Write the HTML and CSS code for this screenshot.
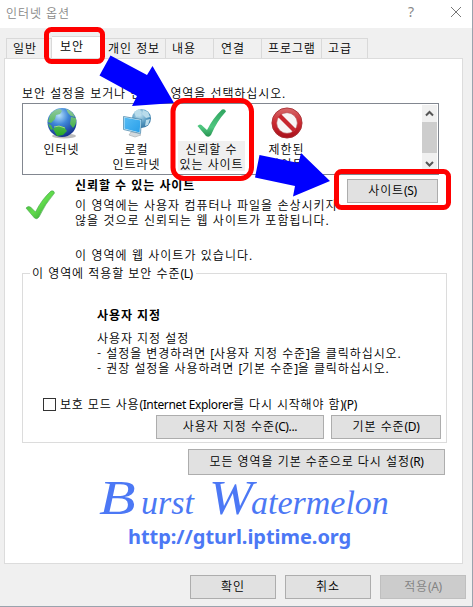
FILE: index.html
```html
<!DOCTYPE html>
<html lang="ko">
<head>
<meta charset="utf-8">
<title>인터넷 옵션</title>
<link rel="stylesheet" href="styles.css">
</head>
<body>
<div class="window">
  <header class="titlebar">
    <span class="title">인터넷 옵션</span>
    <span class="help">?</span>
    <svg class="close" width="12" height="12" viewBox="0 0 12 12"><path d="M1 1l10 10M11 1L1 11" stroke="#777" fill="none"/></svg>
  </header>
  <nav class="tabs">
    <span class="tab t1">일반</span><span class="tab active">보안</span><span class="tab t3">개인 정보</span><span class="tab t4">내용</span><span class="tab t5">연결</span><span class="tab t6">프로그램</span><span class="tab t7">고급</span>
  </nav>
  <main class="panel">
    <p class="prompt">보안 설정을 보거나 변경할 영역을 선택하십시오.</p>
    <div class="zones">
      <div class="zone">
        <svg width="32" height="32" viewBox="0 0 32 32">
          <defs>
            <radialGradient id="globe" cx=".4" cy=".25" r=".8"><stop offset="0" stop-color="#b9e3fb"/><stop offset=".4" stop-color="#3f86d8"/><stop offset="1" stop-color="#102a86"/></radialGradient>
            <linearGradient id="land" x2="0" y2="1"><stop offset="0" stop-color="#8fc9a0"/><stop offset="1" stop-color="#27a822"/></linearGradient>
          </defs>
          <ellipse cx="18" cy="29" rx="12" ry="2.5" fill="#bbb"/>
          <circle cx="16" cy="15.5" r="14.5" fill="url(#globe)"/>
          <path d="M4 8Q8 2 14 2l2 2-2 3-4 1-1 4-4 4-3-1zM20 2q6 1 9 8l-4-1-3-3zM25 10l5 1q1 6-3 10l-3-4zM7 22l5-3 6 1 3 4-4 4-6 1zM2 17l3 1 2 4-2 1z" fill="url(#land)"/>
          <path d="M8 20l5-1 6 2" stroke="#9ddc79" fill="none"/>
        </svg>
        <span>인터넷</span>
      </div>
      <div class="zone">
        <svg width="32" height="32" viewBox="0 0 32 32">
          <defs>
            <radialGradient id="globe2" cx=".4" cy=".3" r=".8"><stop offset="0" stop-color="#c8e7f4"/><stop offset=".6" stop-color="#4f94bd"/><stop offset="1" stop-color="#326f9d"/></radialGradient>
            <linearGradient id="screen" x2="1" y2="1"><stop offset="0" stop-color="#59bdf5"/><stop offset="1" stop-color="#269de8"/></linearGradient>
          </defs>
          <circle cx="20.500" cy="11.500" r="9.500" fill="url(#globe2)"/>
          <path d="M13 5l5-3 3 3-3 4-3 1zM22 3l5 2 2 5-4 1-4-4zM25 13l4-1-2 6-3 1z" fill="#b9dceb"/>
          <path d="M10 25l7 1 3 2-6 2-6-2z" fill="#d4dade" stroke="#a2a9ad" stroke-width=".6"/>
          <path d="M3 10l17 3-1 13-16-4z" fill="url(#screen)" stroke="#d2effb"/>
          <path d="M2.500 9.500l18 3-1 14-17-4z" fill="none" stroke="#3b7da5" stroke-width=".7"/>
        </svg>
        <span>로컬<br>인트라넷</span>
      </div>
      <div class="zone selected">
        <svg width="32" height="32" viewBox="0 0 32 32">
          <defs><linearGradient id="check" x2="0" y2="1"><stop offset="0" stop-color="#2fa35f"/><stop offset=".65" stop-color="#4fc780"/><stop offset="1" stop-color="#27924f"/></linearGradient></defs>
          <path d="M1.500 19q2-2.500 4-1l5.500 5Q17 11 26 2.500q3-1 4 2Q21 14 15 28q-2 3-5 1z" fill="url(#check)"/>
        </svg>
        <span>신뢰할 수<br>있는 사이트</span>
      </div>
      <div class="zone">
        <svg width="34" height="34" viewBox="0 0 34 34">
          <defs><linearGradient id="ban" x2="0" y2="1"><stop offset="0" stop-color="#d66a6b"/><stop offset=".5" stop-color="#cc2930"/><stop offset="1" stop-color="#a8101b"/></linearGradient></defs>
          <circle cx="17" cy="17" r="16" fill="url(#ban)" stroke="#a93338"/>
          <circle cx="17" cy="17" r="11" fill="#f8f5f5" stroke="#b5575a" stroke-width=".7"/>
          <path d="M9 9l16 16" stroke="#c7272f" stroke-width="4.500"/>
        </svg>
        <span>제한된<br>사이트</span>
      </div>
      <div class="scrollbar">
        <svg width="15" height="17" viewBox="0 0 15 17"><path d="M4 10.500L7.500 7l3.500 3.500" fill="none" stroke="#555" stroke-width="2"/></svg>
        <i class="thumb"></i>
        <svg class="down" width="15" height="17" viewBox="0 0 15 17"><path d="M4 6l3.500 3.500L11 6" fill="none" stroke="#555" stroke-width="2"/></svg>
      </div>
    </div>
    <section class="details">
      <svg class="bigcheck" width="30" height="30" viewBox="0 0 30 30">
        <defs><linearGradient id="check2" x2="1" y2="1"><stop offset="0" stop-color="#35a532"/><stop offset=".5" stop-color="#62dc4d"/><stop offset="1" stop-color="#248d2a"/></linearGradient></defs>
        <path d="M1 18q2-2.500 4.500-1l5 5Q17 9 26 1q3-1 3.500 2Q20 14 14 27q-2 3-4.500 1z" fill="url(#check2)" stroke="#47a44a" stroke-width=".6"/>
      </svg>
      <div class="copy">
        <h2>신뢰할 수 있는 사이트</h2>
        <p>이 영역에는 사용자 컴퓨터나 파일을 손상시키지<br>않을 것으로 신뢰되는 웹 사이트가 포함됩니다.</p>
        <p class="note">이 영역에 웹 사이트가 있습니다.</p>
      </div>
      <button class="sites">사이트<span class="latin">(S)</span></button>
    </section>
    <section class="level">
      <h3>이 영역에 적용할 보안 수준<span class="latin">(L)</span></h3>
      <div class="custom">
        <h4>사용자 지정</h4>
        <p>사용자 지정 설정<br>- 설정을 변경하려면 <span class="latin">[</span>사용자 지정 수준<span class="latin">]</span>을 클릭하십시오.<br>- 권장 설정을 사용하려면 <span class="latin">[</span>기본 수준<span class="latin">]</span>을 클릭하십시오.</p>
      </div>
      <label class="protect"><i class="box"></i><span>보호 모드 사용<span class="latin">(Internet Explorer</span>를 다시 시작해야 함<span class="latin">)(P)</span></span></label>
      <div class="actions"><button class="wide">사용자 지정 수준<span class="latin">(C)...</span></button><button class="default">기본 수준<span class="latin">(D)</span></button></div>
    </section>
    <div class="reset"><button>모든 영역을 기본 수준으로 다시 설정<span class="latin">(R)</span></button></div>
    <div class="brand"><span class="word burst"><b>B</b>urst</span><span class="word melon"><b>W</b>atermelon</span></div>
    <p class="url">http://gturl.iptime.org</p>
  </main>
  <footer><button>확인</button><button>취소</button><button disabled>적용<span class="latin">(A)</span></button></footer>
</div>
<svg class="marks" width="473" height="607" viewBox="0 0 473 607">
  <g fill="none" stroke="#f00" stroke-width="5">
    <rect x="46.500" y="29.500" width="56" height="32" rx="5"/>
    <rect x="173" y="100.500" width="78.500" height="78" rx="11"/>
    <rect x="336.500" y="171.500" width="112" height="36" rx="5"/>
  </g>
  <path d="M110.500 55.500L147 75l5.500-9L174 103l-42 3 5-10-37.500-20.500zM259.500 155l39 8 2.500-10 29 28-37 15.500 2-10.500-40-8.500z" fill="#00f"/>
</svg>
</body>
</html>
```
FILE: styles.css
```css
* { box-sizing: border-box; margin: 0; padding: 0; }
body { width: 473px; height: 607px; overflow: hidden; background: #9aa3ad; font: 12px/15px "Noto Sans CJK KR", sans-serif; font-weight: 350; letter-spacing: .9px; color: #000; white-space: nowrap; }
.window { width: 472px; height: 606px; background: #f0f0f0; display: flex; flex-direction: column; }
.latin { font-family: "Noto Sans", sans-serif; font-weight: 400; letter-spacing: -.35px; line-height: 10px; }
.titlebar { height: 28px; flex: none; background: #fff; color: #888; display: flex; align-items: center; padding: 0 10px 4px 6px; }
.title { flex: 1; }
.help { font: 14px/20px "Noto Sans", sans-serif; margin-right: 36px; letter-spacing: 0; }
.tabs { height: 30px; flex: none; display: flex; align-items: flex-end; padding-left: 6px; }
.tab { height: 20px; border: 1px solid #d9d9d9; border-bottom: 0; border-left: 0; line-height: 18px; padding-left: 6px; }
.t1 { width: 46px; border-left: 1px solid #d9d9d9; }
.tab.active { width: 52px; height: 22px; background: #fff; padding-left: 8px; }
.t3 { width: 62px; padding-left: 4px; }
.t4 { width: 48px; }
.t5 { width: 48px; padding-left: 7px; }
.t6 { width: 60px; }
.t7 { width: 46px; }
.panel { width: 459px; height: 506px; flex: none; margin-left: 4px; background: #fff; border: 1px solid #dcdcdc; padding: 26px 0 0 17px; }
.prompt { height: 18px; }
.zones { width: 417px; height: 72px; border: 1px solid #828790; display: flex; padding: 1px; overflow: hidden; }
.zone { width: 75px; flex: none; display: flex; flex-direction: column; align-items: center; text-align: center; padding-top: 2px; }
.zone svg { flex: none; height: 32px; margin-bottom: 2px; }
.zone > span { padding: 0 2px; }
.selected > span { background: #f0f0f0; }
.scrollbar { width: 15px; height: 68px; margin-left: auto; background: #f0f0f0; display: flex; flex-direction: column; }
.scrollbar svg { flex: none; height: 17px; margin: 0; }
.thumb { height: 31px; background: #cdcdcd; }
.scrollbar .down { margin-top: auto; }
.details { display: flex; height: 98px; }
.bigcheck { margin: 15px 0 0 3px; flex: none; }
.copy { margin-left: 20px; width: 272px; flex: none; padding-top: 2px; }
h2, h3, h4 { font-size: 12px; font-weight: 700; line-height: 15px; }
.copy p { margin-top: 5px; letter-spacing: 1px; }
.copy .note { margin-top: 20px; }
button { height: 24px; border: 1px solid #adadad; background: #e1e1e1; font: inherit; letter-spacing: inherit; color: #000; line-height: 20px; padding-bottom: 2px; white-space: nowrap; }
.sites { width: 91px; margin-top: 4px; }
.level { width: 425px; height: 170px; border: 1px solid #dcdcdc; }
h3 { width: max-content; font-weight: 350; background: #fff; margin: -9px 0 0 7px; padding: 0 3px 0 2px; }
.custom { padding: 27px 0 0 74px; }
.custom p { margin-top: 8px; }
.protect { display: flex; align-items: center; height: 15px; margin: 22px 0 0 20px; }
.box { width: 13px; height: 13px; border: 1px solid #333; margin-right: 4px; }
.protect > span { margin-top: -2px; letter-spacing: .8px; }
.actions { display: flex; gap: 7px; margin: 3px 0 0 133px; }
.wide { width: 168px; }
.default { width: 110px; }
.reset { margin: 6px 0 0 166px; }
.reset button { width: 257px; height: 26px; display: block; }
.brand { height: 46px; display: flex; color: #4c78f5; font: italic 34px/46px "Liberation Serif", serif; letter-spacing: 0; }
.brand b { display: inline-block; font-weight: 400; font-size: 48px; transform: scaleX(1.25); transform-origin: 0 75%; }
.burst { width: 110px; margin-left: 77px; }
.burst b { width: 42px; }
.melon { font-size: 34px; }
.melon b { width: 42px; transform: scaleX(1.1); }
.url { margin-left: 106px; color: #4c78f5; font: bold 20px/32px "Noto Sans", sans-serif; letter-spacing: -.05px; }
footer { display: flex; gap: 9px; padding: 11px 0 0 190px; }
footer button { width: 86px; }
footer button:disabled { background: #ccc; border-color: #bfbfbf; color: #838383; }
.marks { position: absolute; left: 0; top: 0; }
```
